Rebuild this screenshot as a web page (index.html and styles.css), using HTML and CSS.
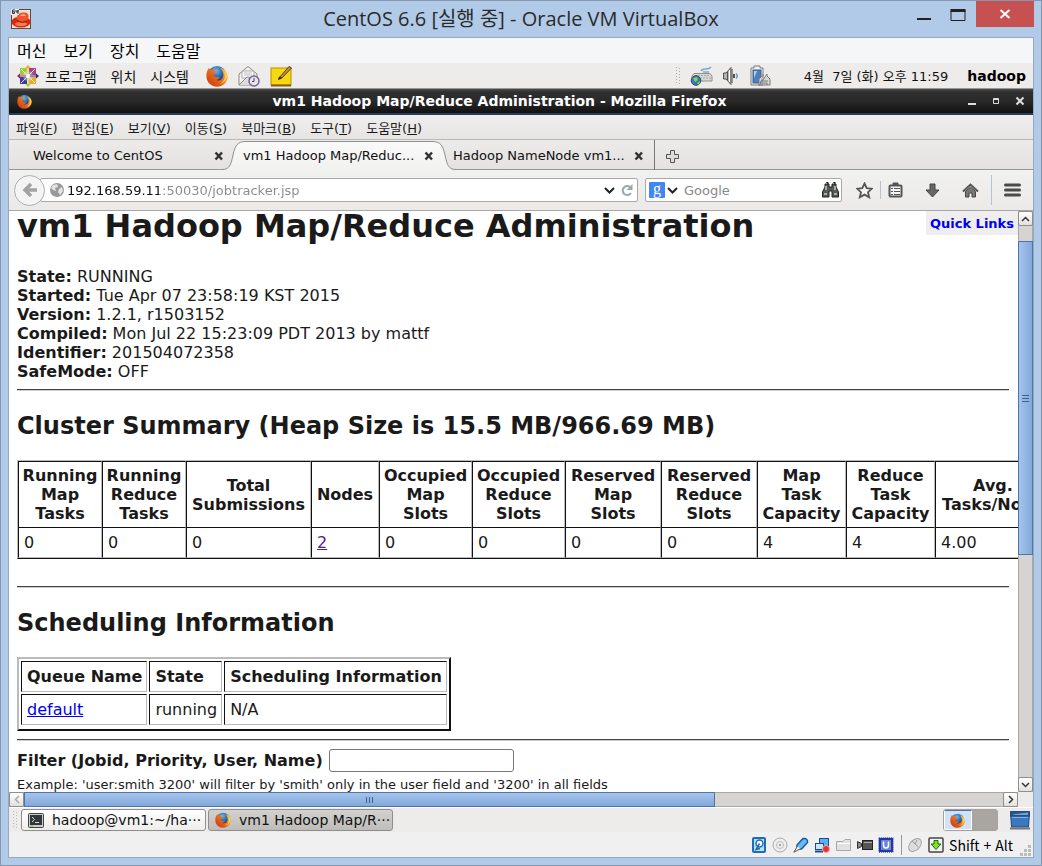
FILE: index.html
```html
<!DOCTYPE html>
<html lang="ko">
<head>
<meta charset="utf-8">
<title>CentOS 6.6 [실행 중] - Oracle VM VirtualBox</title>
<link rel="stylesheet" href="styles.css">
</head>
<body>
<svg class="defs" width="0" height="0" aria-hidden="true">
  <defs>
    <radialGradient id="globe" cx="45%" cy="25%" r="70%"><stop offset="0" stop-color="#6fb7e8"/><stop offset=".5" stop-color="#2a67ad"/><stop offset="1" stop-color="#14285c"/></radialGradient>
    <linearGradient id="fox" x1="0" y1="1" x2="1" y2="0"><stop offset="0" stop-color="#c92c12"/><stop offset=".55" stop-color="#ee7018"/><stop offset="1" stop-color="#ffd84a"/></linearGradient>
    <linearGradient id="tab" x1="0" y1="0" x2="0" y2="1"><stop offset="0" stop-color="#fafafa"/><stop offset="1" stop-color="#f1f1f0"/></linearGradient>
    <symbol id="firefox" viewBox="0 0 20 20">
      <circle cx="10" cy="9.5" r="8.5" fill="url(#globe)"/>
      <path d="M1.2 5.2 2.6 2.8 4 4.6C5 4 6.3 4 7.4 4.5L9.8 5.4 8.3 7.3 6.6 8.4C7 10.2 8 11.3 9.8 11.2L12.2 10.8C11.9 12.6 9.8 13.7 8.4 13.5 12 15.4 15.8 12.8 15.8 9 15.8 6.3 14.5 4.2 13 2.5 17 3.6 19.6 6.8 19.6 10.4 19.6 15.8 15.2 19.7 10 19.7 4.4 19.7.4 15.4.4 10.3.4 8.3.6 6.6 1.2 5.2Z" fill="url(#fox)"/>
      <path d="M15.8 5C18.8 9.6 17 15.2 12.4 17.2 16.8 16.4 19.3 13.4 19.1 9.6 18.7 7.4 17.6 6 15.8 5Z" fill="#ffe45c" opacity=".8"/>
    </symbol>
  </defs>
</svg>

<div class="vm">
  <header class="vm-title">
    <svg class="vm-icon" width="22" height="22" viewBox="0 0 22 22" aria-hidden="true"><rect x="1.500" y="1.500" width="19" height="19" fill="#f4dfd3" stroke="#5c4a40"/><ellipse cx="11" cy="14" rx="9.500" ry="5.500" fill="#d6290e"/><ellipse cx="11" cy="16" rx="6" ry="2" fill="#ff7a4c"/><path d="M7 12C6 6 10 4 15 4.500 19 5 19.500 9 17.500 12.500 14 15 9 14.500 7 12Z" fill="#f0552a"/><path d="M10 8C12 5.500 15 6 16 8Z" fill="#ffb28f"/><path d="M7 12C10 15 15 15 17.500 12" fill="none" stroke="#7d1203"/><rect x="1" y="1" width="8" height="6" fill="#eee"/><path d="M5 2H2.500V5.500H4.500V3.800H2.500M6 2V4H8V2V6" fill="none" stroke="#222" stroke-width=".9"/></svg>
    <h1 class="vm-name">CentOS 6.6 [실행 중] - Oracle VM VirtualBox</h1>
    <div class="vm-controls">
      <button class="vm-btn" aria-label="최소화"><svg width="16" height="20"><path d="M1 18h14" stroke="#222" stroke-width="2"/></svg></button>
      <button class="vm-btn" aria-label="최대화"><svg width="16" height="20"><path d="M1 9.500V19.500H15V9" fill="none" stroke="#222"/><path d="M.5 9.500h15" stroke="#222" stroke-width="3"/></svg></button>
      <button class="vm-close" aria-label="닫기"><svg width="12" height="10"><path d="M1.500 1 10.500 9M10.500 1 1.500 9" stroke="#fff" stroke-width="2"/></svg></button>
    </div>
  </header>

  <div class="vm-body">
    <nav class="vm-menu">
      <button>머신</button><button>보기</button><button>장치</button><button>도움말</button>
    </nav>

    <div class="panel">
      <button class="panel-item"><svg width="22" height="22" viewBox="0 0 22 22"><path d="M11 0 14 3.500V9H8V3.500Z" fill="#efa724"/><path d="M0 11 3.500 8H9V14H3.500Z" fill="#932279"/><path d="M22 11 18.500 8H13V14H18.500Z" fill="#262577"/><path d="M11 22 14 18.500V13H8V18.500Z" fill="#9ccd2a"/><path d="M3 3H10V10H3Z" fill="#9ccd2a"/><path d="M12 3H19V10H12Z" fill="#a1408b"/><path d="M3 12H10V19H3Z" fill="#3f3c9b"/><path d="M12 12H19V19H12Z" fill="#efa724"/><path d="M11 3V19M3 11H19" stroke="#f4f4f4" stroke-width="1.200"/><path d="M4 4 18 18M18 4 4 18" stroke="#f4f4f4" stroke-width=".9"/><path d="M9 6.500V9H6.500M13 6.500V9H15.500M9 15.500V13H6.500M13 15.500V13H15.500" fill="none" stroke="#f4f4f4" stroke-width=".7"/></svg>프로그램</button>
      <button class="panel-item">위치</button>
      <button class="panel-item">시스템</button>
      <div class="launchers">
        <button aria-label="Firefox"><svg width="22" height="22"><use href="#firefox"/></svg></button>
        <button aria-label="메일"><svg width="22" height="22" viewBox="0 0 22 22"><path d="M1 9 10 1.500 19 9V20H1Z" fill="#f1f1ef" stroke="#888"/><path d="M4 6H16V13H4Z" fill="#fff" stroke="#aaa"/><path d="M6 8H14M6 10H14" stroke="#bbb"/><path d="M1 20 9 12H11L19 20" fill="#ddd" stroke="#888"/><circle cx="16" cy="16" r="5" fill="#e9e4f0" stroke="#75629a" stroke-width="1.500"/><path d="M16 13V16.500H14" fill="none" stroke="#444"/></svg></button>
        <button aria-label="메모"><svg width="22" height="22" viewBox="0 0 22 22"><rect x="1" y="3" width="20" height="17" fill="#f5d80d" stroke="#b59200"/><path d="M1 20.500H21" stroke="#8c5a12" stroke-width="2"/><path d="M9 13 19 1.500 21.500 3 12 13 8.500 14.500Z" fill="#c98b4a" stroke="#5c3715"/><path d="M8 14.500 9.500 11.500 12 13Z" fill="#222"/></svg></button>
      </div>
      <div class="tray">
        <svg width="5" height="18"><path d="M1.500 0V18M4.500 1V18" stroke="#aaa" stroke-dasharray="1 2"/></svg>
        <svg width="24" height="22" viewBox="0 0 24 22"><path d="M12 6C14 2 19 6 22 2M14 7H20" fill="none" stroke="#7fa8cf" stroke-width="1.500"/><path d="M5 8.500H21L23 11V16H3V11Z" fill="#d8d9d4" stroke="#8e908b"/><path d="M6 10.500H21M5 13H22" stroke="#a5a7a2" stroke-dasharray="2 1"/><circle cx="7" cy="15.500" r="4.800" fill="#3a76b8" stroke="#234d7d"/><path d="M4 13 8 12 9 15 6 17ZM8 18 11 16 10 20Z" fill="#8ed32f"/></svg>
        <svg width="18" height="20" viewBox="0 0 18 20"><path d="M1.500 7H4L9 1.500V18.500L4 13H1.500Z" fill="#b5b6b1" stroke="#51534f"/><path d="M5.500 6V14" stroke="#51534f"/><path d="M7.500 4V16" stroke="#fff"/><path d="M10 3V17" stroke="#777" stroke-width="1.500"/><path d="M12 8V12" stroke="#51534f" stroke-width="2"/><path d="M14 7.500Q16.500 10 14 12.500" fill="none" stroke="#6b9bd0" stroke-width="1.500"/></svg>
        <svg width="22" height="22" viewBox="0 0 22 22"><path d="M2 3H5V1H11V3H14V20H2Z" fill="#f1f1ef" stroke="#7b7d79"/><rect x="4" y="5" width="8" height="13" fill="#4d7fb8" stroke="#34609a"/><path d="M5 6H8L5 13Z" fill="#b8d0ea"/><path d="M10 21V14L13 11H14V9M18 9V11L21 14V20H10.500Z" fill="#d8d9d4" stroke="#7b7d79"/><path d="M12 16H19M13 20V18H18V20" fill="none" stroke="#7b7d79"/></svg>
      </div>
      <time class="clock">4월&nbsp; 7일 (화) 오후 11:59</time>
      <b class="user">hadoop</b>
    </div>

    <div class="ff-title">
      <svg width="15" height="15"><use href="#firefox"/></svg>
      <strong class="ff-name">vm1 Hadoop Map/Reduce Administration - Mozilla Firefox</strong>
      <button aria-label="최소화"><svg width="10" height="10"><path d="M1 8h8" stroke="#ddd" stroke-width="2"/></svg></button>
      <button aria-label="최대화"><svg width="10" height="10"><path d="M2.500 2.500h5V7.500H2.500ZM2 3.500H8" fill="none" stroke="#ddd"/></svg></button>
      <button aria-label="닫기"><svg width="10" height="10"><path d="M1.500 1.500 8.500 8.500M8.500 1.500 1.500 8.500" stroke="#ddd" stroke-width="2"/></svg></button>
    </div>

    <nav class="ff-menu">
      <button>파일(<u>F</u>)</button><button>편집(<u>E</u>)</button><button>보기(<u>V</u>)</button><button>이동(<u>S</u>)</button><button>북마크(<u>B</u>)</button><button>도구(<u>T</u>)</button><button>도움말(<u>H</u>)</button>
    </nav>

    <div class="tabs">
      <div class="tab"><button class="tab-label">Welcome to CentOS</button><button class="tab-x" aria-label="탭 닫기"><svg width="10" height="10"><path d="M1.500 1.500 8 8.500M8 1.500 1.500 8.500" stroke="#333" stroke-width="2.500"/></svg></button></div>
      <div class="tab tab-on">
        <svg width="24" height="30"><path d="M0 29.500C8 29.500 9 24 11 15 13 6 15 1.500 24 1.500V30H0Z" fill="url(#tab)"/><path d="M0 29.500C8 29.500 9 24 11 15 13 6 15 1.500 24 1.500" fill="none" stroke="#8f8f8d"/></svg>
        <div class="tab-mid"><button class="tab-label">vm1 Hadoop Map/Reduc...</button><button class="tab-x" aria-label="탭 닫기"><svg width="10" height="10"><path d="M1.500 1.500 8 8.500M8 1.500 1.500 8.500" stroke="#333" stroke-width="2.500"/></svg></button></div>
        <svg width="24" height="30"><path d="M24 29.500C16 29.500 15 24 13 15 11 6 9 1.500 0 1.500V30H24Z" fill="url(#tab)"/><path d="M24 29.500C16 29.500 15 24 13 15 11 6 9 1.500 0 1.500" fill="none" stroke="#8f8f8d"/></svg>
      </div>
      <div class="tab tab-last"><button class="tab-label">Hadoop NameNode vm1...</button><button class="tab-x" aria-label="탭 닫기"><svg width="10" height="10"><path d="M1.500 1.500 8 8.500M8 1.500 1.500 8.500" stroke="#333" stroke-width="2.500"/></svg></button></div>
      <button class="tab-new" aria-label="새 탭"><svg width="13" height="13"><path d="M4.500.5H8.500V4.500H12.500V8.500H8.500V12.500H4.500V8.500H.5V4.500H4.500Z" fill="#ddd" stroke="#555"/></svg></button>
    </div>

    <div class="nav">
      <button class="back" aria-label="뒤로"><svg width="16" height="16"><path d="M9 2 3 8 9 14M3.500 8H15" fill="none" stroke="#a2a2a2" stroke-width="3.500"/></svg></button>
      <div class="url">
        <svg width="14" height="14"><circle cx="7" cy="7" r="7" fill="#999"/><path d="M3 2 7 1 8 4 5 5 6 8 3 7 1 5ZM9 6 12 4 13 8 10 12 8 9Z" fill="#e4e4e4"/></svg>
        <input class="url-text" aria-label="주소" value="192.168.59.11:50030/jobtracker.jsp">
        <button aria-label="방문 기록"><svg width="11" height="7"><path d="M1 1 5.500 5.500 10 1" fill="none" stroke="#222" stroke-width="2"/></svg></button>
        <button aria-label="새로 고침"><svg width="12" height="12"><path d="M9 3A4.500 4.500 0 1 0 10 9" fill="none" stroke="#9aa6b1" stroke-width="2"/><path d="M11.500 0V6H5.500Z" fill="#9aa6b1"/></svg></button>
      </div>
      <div class="search">
        <button class="engine" aria-label="검색 엔진"><span class="g">g</span><svg width="11" height="7"><path d="M1 1 5.500 5.500 10 1" fill="none" stroke="#222" stroke-width="2"/></svg></button>
        <input aria-label="검색" placeholder="Google">
        <button aria-label="찾기"><svg width="17" height="16" viewBox="0 0 17 16"><path d="M3 2H7V5H10V2H14V5L16.500 10V15H10V9H7V15H.5V10L3 5Z" fill="#555a55" stroke="#222"/><path d="M2 12H5M12 12H15M4 4V8M13 4V8" stroke="#c5c9c5" stroke-width="1.500"/><path d="M4 0h2v2M11 0h2v2" stroke="#333"/></svg></button>
      </div>
      <div class="tools">
        <button aria-label="북마크"><svg width="17" height="17"><path d="M8.500 1.500 10.700 6.200 15.800 6.700 12 10.200 13.200 15.300 8.500 12.600 3.800 15.300 5 10.200 1.200 6.700 6.300 6.200Z" fill="#f5f5f5" stroke="#555" stroke-width="1.800"/></svg></button>
        <button class="lined" aria-label="북마크 목록"><svg width="15" height="16"><rect x="1.500" y="3.500" width="12" height="11" rx="1" fill="#f5f5f5" stroke="#555" stroke-width="2"/><path d="M5 3V1H10V3" fill="#555" stroke="#555"/><path d="M3 6.500H5M6 6.500H12M3 9.500H5M6 9.500H12M3 12.500H5M6 12.500H12" stroke="#555"/></svg></button>
        <button aria-label="다운로드"><svg width="15" height="15"><path d="M5 1H10V7H14L7.500 14 1 7H5Z" fill="#666" stroke="#444"/></svg></button>
        <button aria-label="홈"><svg width="17" height="15"><path d="M3.500 8.500V14H7V10H10V14H13.500V8.500L8.500 4Z" fill="#777" stroke="#444"/><path d="M1 8.500 8.500 1.500 16 8.500" fill="none" stroke="#555" stroke-width="2"/></svg></button>
        <button class="lined menu-btn" aria-label="메뉴"><svg width="17" height="14"><path d="M1.500 2H15.500M1.500 7H15.500M1.500 12H15.500" stroke="#4a4a4a" stroke-width="3" stroke-linecap="round"/></svg></button>
      </div>
    </div>

    <div class="view">
      <main class="page">
        <a class="quick" href="#quick">Quick Links</a>
        <h2 class="page-title">vm1 Hadoop Map/Reduce Administration</h2>
        <p class="facts"><b>State:</b> RUNNING<br><b>Started:</b> Tue Apr 07 23:58:19 KST 2015<br><b>Version:</b> 1.2.1, r1503152<br><b>Compiled:</b> Mon Jul 22 15:23:09 PDT 2013 by mattf<br><b>Identifier:</b> 201504072358<br><b>SafeMode:</b> OFF</p>
        <hr>
        <h3>Cluster Summary (Heap Size is 15.5 MB/966.69 MB)</h3>
        <table class="summary">
          <colgroup><col class="c-run" span="2"><col class="c-total"><col class="c-nodes"><col class="c-occ" span="2"><col class="c-res" span="2"><col class="c-cap" span="2"><col class="c-avg"></colgroup>
          <thead><tr><th>Running<br>Map<br>Tasks</th><th>Running<br>Reduce<br>Tasks</th><th>Total<br>Submissions</th><th>Nodes</th><th>Occupied<br>Map<br>Slots</th><th>Occupied<br>Reduce<br>Slots</th><th>Reserved<br>Map<br>Slots</th><th>Reserved<br>Reduce<br>Slots</th><th>Map<br>Task<br>Capacity</th><th>Reduce<br>Task<br>Capacity</th><th>Avg.<br>Tasks/Node</th></tr></thead>
          <tbody><tr><td>0</td><td>0</td><td>0</td><td><a class="seen" href="#nodes">2</a></td><td>0</td><td>0</td><td>0</td><td>0</td><td>4</td><td>4</td><td>4.00</td></tr></tbody>
        </table>
        <hr class="hr-gap">
        <h3>Scheduling Information</h3>
        <table class="queues">
          <thead><tr><th>Queue Name</th><th>State</th><th>Scheduling Information</th></tr></thead>
          <tbody><tr><td><a href="#default">default</a></td><td>running</td><td>N/A</td></tr></tbody>
        </table>
        <hr>
        <div class="filter"><label for="filter">Filter (Jobid, Priority, User, Name)</label><input id="filter" type="text"></div>
        <p class="hint">Example: 'user:smith 3200' will filter by 'smith' only in the user field and '3200' in all fields</p>
      </main>
      <div class="vbar">
        <button aria-label="위로"><svg width="9" height="6"><path d="M1 5 4.500 1.500 8 5" fill="none" stroke="#333" stroke-width="1.500"/></svg></button>
        <div class="vtrack"><div class="vthumb"><svg width="7" height="7"><path d="M0 .5H7M0 3.500H7M0 6.500H7" stroke="#3f6190"/></svg></div></div>
        <button aria-label="아래로"><svg width="9" height="6"><path d="M1 1 4.500 4.500 8 1" fill="none" stroke="#333" stroke-width="1.500"/></svg></button>
      </div>
      <div class="hbar">
        <button aria-label="왼쪽으로"><svg width="6" height="9"><path d="M5 1 1.500 4.500 5 8" fill="none" stroke="#aaa" stroke-width="1.500"/></svg></button>
        <div class="htrack"><div class="hthumb"><svg width="7" height="6"><path d="M.5 0V6M3.500 0V6M6.500 0V6" stroke="#3f6190"/></svg></div></div>
        <button aria-label="오른쪽으로"><svg width="6" height="9"><path d="M1 1 4.500 4.500 1 8" fill="none" stroke="#333" stroke-width="1.500"/></svg></button>
      </div>
      <div class="corner"></div>
    </div>

    <div class="taskbar">
      <svg width="6" height="18"><path d="M1.500 0V18M4.500 1V18" stroke="#bbb" stroke-dasharray="1 2"/></svg>
      <div class="tasks">
        <button class="task"><svg width="16" height="15"><rect x=".5" y=".5" width="15" height="14" rx="1" fill="#ccc" stroke="#444"/><rect x="2" y="2" width="12" height="10" fill="#30383a"/><path d="M4 4 6.500 6.500 4 9M7 9.500H11" fill="none" stroke="#ddd"/><path d="M2 13H5" stroke="#6fcf2f"/></svg><span>hadoop@vm1:~/ha···</span></button>
        <button class="task task-on"><svg width="16" height="16"><use href="#firefox"/></svg><span>vm1 Hadoop Map/R···</span></button>
      </div>
      <div class="pager"><button class="space-on" aria-label="작업 공간 1"><svg width="15" height="15"><use href="#firefox"/></svg></button><button aria-label="작업 공간 2"></button></div>
      <button class="trash" aria-label="휴지통"><svg width="22" height="20"><path d="M1.500 2H20.500L19.500 17H2.500Z" fill="#3b78bd" stroke="#1d4a80"/><path d="M1.500 1.500H20.500V6H1.500Z" fill="#28568f" stroke="#1d4a80"/><path d="M4 4.500 19 2.500V5H4Z" fill="#6fa3d8"/><path d="M3 7.500H19" stroke="#7fb1e3"/><path d="M1 18.500H21" stroke="#777" stroke-width="2"/></svg></button>
    </div>

    <footer class="status">
      <svg width="15" height="16"><rect x="1" y="1" width="12" height="14" rx="1" fill="#bfe0f8" stroke="#1c6eb8" stroke-width="2"/><circle cx="7.500" cy="6.500" r="3.500" fill="#fff" stroke="#1c6eb8" stroke-width="1.500"/><path d="M7.500 6.500 4 12.500 8 11.500" fill="none" stroke="#1c6eb8" stroke-width="1.500"/></svg>
      <svg width="16" height="16"><circle cx="8" cy="8" r="7" fill="#eee" stroke="#aaa"/><circle cx="8" cy="8" r="3.500" fill="none" stroke="#bbb"/><circle cx="8" cy="8" r="1" fill="#888"/></svg>
      <svg width="16" height="16"><path d="M4 8 10 1.500Q15 1 14.500 5.500L8.500 12Q3.500 12.500 4 8Z" fill="#6db8f2" stroke="#145fa8" stroke-width="1.500"/><path d="M4.500 9 .8 15.200 7.500 11.800" fill="#eee" stroke="#555"/></svg>
      <svg width="16" height="16"><rect x="5.500" y="1.500" width="9" height="8" fill="#5eaef2" stroke="#184f8c"/><rect x="1.500" y="6.500" width="8" height="6" fill="#cde6fb" stroke="#184f8c"/><path d="M1 14.500H9" stroke="#184f8c" stroke-width="2"/><circle cx="12" cy="12" r="3.500" fill="#e0352b" stroke="#f7a59c"/></svg>
      <svg width="17" height="14"><path d="M1.500 12.500V3.500H8L10 1.500H15.500V12.500Z" fill="#e2e2e2" stroke="#a8a8a8"/><path d="M2 5.500H15" stroke="#fff"/></svg>
      <svg width="16" height="12"><rect x="5.500" y="1.500" width="10" height="9" fill="#555" stroke="#222"/><path d="M.5 2.500V9.500L4.500 7.500V4.500Z" fill="#888" stroke="#333"/><path d="M7 3.500H15" stroke="#aaa"/></svg>
      <svg width="16" height="16"><rect x="2" y="2" width="12" height="12" fill="#6a83dc" stroke="#28379e" stroke-width="2"/><rect x=".8" y=".8" width="14.400" height="14.400" fill="none" stroke="#28379e" stroke-dasharray="1 1"/><path d="M5.500 4.500V8Q5.500 11 8 11T10.500 8V4.500" fill="none" stroke="#fff" stroke-width="1.500"/></svg>
      <i class="rule"></i>
      <svg width="16" height="16"><ellipse cx="8" cy="8" rx="5" ry="7.500" transform="rotate(45 8 8)" fill="#ddd" stroke="#a3a3a3"/><path d="M5 4 11.500 10M10 3 8 7" fill="none" stroke="#999"/></svg>
      <svg width="16" height="16"><rect x="1" y="1" width="14" height="14" rx="1" fill="#f4f4f4" stroke="#444" stroke-width="1.500"/><path d="M6 3.500H10V7H13L8 12.500 3 7H6Z" fill="#7ce41c" stroke="#226b0a"/></svg>
      <span class="hostkey">Shift + Alt</span>
      <svg class="grip" width="11" height="11"><path d="M8 1.500H11M4 5.500H7M8 5.500H11M0 9.500H3M4 9.500H7M8 9.500H11" stroke="#bbb" stroke-width="3"/></svg>
    </footer>
  </div>
</div>
</body>
</html>
```

FILE: styles.css
```css
* { box-sizing: border-box; }
body { margin: 0; font-family: "DejaVu Sans", "Noto Sans CJK KR", sans-serif; font-size: 13px; color: #1a1a1a; }
button { margin: 0; padding: 0; border: 0; background: none; font: inherit; color: inherit; display: inline-flex; align-items: center; }
input { font: inherit; }
svg { display: block; flex: none; }
.defs { position: absolute; }

/* virtual machine window */
.vm { display: flex; flex-direction: column; height: 100vh; padding: 0 7px 7px; border: 1px solid #8597b0; background: #b0cae8; overflow: hidden; }
.vm-title { flex: none; height: 36px; display: grid; grid-template-columns: 1fr auto 1fr; align-items: center; }
.vm-icon { margin-left: 2px; }
.vm-name { margin: 0; font: 20px/24px "Open Sans", "Noto Sans CJK KR", sans-serif; color: #2a2a2a; }
.vm-controls { display: flex; justify-content: flex-end; align-self: start; gap: 18px; }
.vm-close { width: 58px; height: 26px; justify-content: center; background: #c75050; margin-left: -8px; }
.vm-btn { height: 20px; }
.vm-body { flex: 1; min-height: 0; display: flex; flex-direction: column; border: 1px solid #93a9c4; background: #f0f0f0; }
.vm-body > * { flex: none; }
.vm-menu { height: 25px; display: flex; align-items: center; gap: 17px; padding: 0 8px 2px; background: #f5f6f8; font: 16px/24px "Noto Sans CJK KR", sans-serif; color: #000; }

/* desktop panel */
.panel { height: 26px; display: flex; align-items: center; padding: 0 7px 0 8px; background: #edeceb; border-bottom: 1px solid #999; color: #111; }
.panel-item { gap: 6px; margin-right: 14px; font: 14px/20px "Noto Sans CJK KR", sans-serif; }
.launchers { display: flex; gap: 10px; margin-left: 3px; }
.tray { display: flex; align-items: center; gap: 9px; margin-left: auto; }
.clock { margin-left: 33px; }
.user { margin-left: 19px; font-size: 14px; color: #000; }

/* browser title and menu */
.ff-title { height: 26px; display: flex; align-items: center; gap: 14px; padding: 0 8px; color: #fff; background: linear-gradient(#4a4a4a 0, #303030 3px, #292929 50%, #111 100%); border-bottom: 2px solid #263b58; }
.ff-name { flex: 1; text-align: center; font-size: 14px; }
.ff-menu { height: 25px; display: flex; align-items: center; gap: 14px; padding: 0 7px; background: linear-gradient(#efeeed, #e6e5e3); border-bottom: 1px solid #bab9b7; white-space: nowrap; }
.ff-menu button { display: block; }

/* tabs */
.tabs { height: 30px; display: flex; background: linear-gradient(#ecebea, #e3e2e0); box-shadow: inset 0 -1px #989896; }
.tab { display: flex; align-items: center; flex: 0 1 213px; justify-content: space-between; min-width: 0; padding: 0 0 0 24px; color: #111; white-space: nowrap; }
.tab-x { padding: 2px 0 0; margin-right: -2px; }
.tab-on { flex-basis: 234px; padding: 0; z-index: 1; }
.tab-mid { position: relative; flex: 1; min-width: 0; height: 29px; align-self: flex-end; display: flex; align-items: center; justify-content: space-between; margin: 0 -1px; padding-bottom: 2px; border-top: 1px solid #8f8f8d; background: linear-gradient(#fafafa, #f1f1f0); }
.tab-mid .tab-label { margin-left: -2px; }
.tab-mid .tab-x { margin-right: -1px; }
.tab-last { flex-basis: 199px; padding: 0 12px 0 0; border-right: 1px solid #777; }
.tab-last .tab-label { margin-left: -3px; }
.tab-new { padding: 2px 0 0 11px; }

/* navigation */
.nav { height: 41px; display: flex; align-items: center; padding: 0 12px 0 5px; background: linear-gradient(#f1f1f0, #ebeae8); border-bottom: 1px solid #a9a8a6; }
.back { width: 31px; height: 31px; justify-content: center; border: 1px solid #aab0b8; border-radius: 50%; background: #f4f4f4; z-index: 1; }
.url, .search { height: 24px; display: flex; align-items: center; gap: 6px; border: 1px solid #aaa9a7; border-radius: 2px; background: #fff; }
.url { flex: 1; min-width: 0; margin-left: -5px; padding: 0 4px 0 9px; }
.url > svg { margin-right: -3px; }
.url-text { flex: 1; min-width: 0; border: 0; padding: 0; outline: 0; color: transparent; background: linear-gradient(90deg, #111 92px, #8a8a8a 92px); -webkit-background-clip: text; background-clip: text; }
.search { flex: 0 1 197px; margin-left: 7px; padding: 0 2px 0 3px; }
.search input { flex: 1; width: 0; min-width: 0; border: 0; padding: 0; outline: 0; background: none; }
.search input::placeholder { color: #888; }
.engine { gap: 2px; }
.g { width: 16px; height: 16px; border-radius: 1px; background: #4285f4; color: #fff; font: 16px/13px "Liberation Serif", serif; text-align: center; }
.tools { display: flex; align-items: center; gap: 22px; padding-left: 14px; }
.tools .lined { height: 18px; padding-left: 7px; margin-left: -15px; border-left: 1px solid #b7c3d0; }
.tools .menu-btn { height: 30px; padding-left: 12px; margin-left: -10px; }

/* viewport and scroll bars */
.vm-body > .view { flex: 1; min-height: 0; display: grid; grid-template: minmax(0, 1fr) 15px / minmax(0, 1fr) 15px; }
.page { position: relative; overflow: hidden; padding: 0 9px 0 8px; background: #fff; font-size: 16px; line-height: 19px; }
.page-title { margin: -4px 0 22px; font-size: 32px; line-height: 38px; white-space: nowrap; }
.quick { position: absolute; top: 0; right: 0; padding: 3px 4px 2px; background: #eee; color: #00e; font-size: 13px; line-height: 19px; font-weight: bold; text-decoration: none; }
.facts { margin: 0; }
hr { height: 2px; margin: 8px 0 21px; border: 0; border-top: 1px solid #444; border-bottom: 1px solid #ccc; }
h3 { margin: 0 0 20px; font-size: 24px; line-height: 28px; }
a { color: #00e; }
.seen { color: #551a8b; }
table { border-spacing: 0; }
.summary { table-layout: fixed; width: 1035px; border: 1px solid #bbb; border-bottom-color: #111; white-space: nowrap; }
.c-run { width: 84px; }
.c-total { width: 125px; }
.c-nodes { width: 68px; }
.c-occ { width: 93px; }
.c-res { width: 96px; }
.c-cap { width: 89px; }
.c-avg { width: 116px; }
.summary th, .summary td { padding: 4px 3px; border-left: 1px solid #111; border-top: 1px solid #111; border-right: 1px solid #bbb; }
.summary td { padding: 5px; border-bottom: 1px solid #bbb; }
hr.hr-gap { margin-top: 27px; }
.queues { border: 2px solid #111; border-top-color: #bbb; border-left-color: #bbb; border-spacing: 2px; padding-bottom: 2px; }
.queues th, .queues td { padding: 5px 4px 5px 5px; border: 1px solid #bbb; border-top-color: #111; border-left-color: #111; text-align: left; }
.queues + hr { margin-bottom: 8px; }
.filter { display: flex; align-items: center; gap: 6px; font-weight: bold; }
.filter input { width: 185px; height: 23px; border: 1px solid #777; border-radius: 3px; background: #fff; }
.hint { margin: 3px 0 0; font-size: 13px; white-space: nowrap; }
.vbar, .hbar { display: flex; background: #d5d4d2; }
.vbar { flex-direction: column; box-shadow: inset 1px 0 #a9a8a6, inset -1px 0 #a9a8a6; }
.hbar { box-shadow: inset 0 1px #a9a8a6, inset 0 -1px #a9a8a6; }
.vbar button, .hbar button { flex: none; width: 15px; height: 15px; justify-content: center; border: 1px solid #8e8e8c; border-radius: 2px; background: linear-gradient(#fff, #e2e1df); }
.vtrack, .htrack { flex: 1; min-width: 0; min-height: 0; }
.vthumb, .hthumb { display: flex; align-items: center; justify-content: center; border: 1px solid #4f74a5; }
.vtrack { padding-top: 15px; }
.vthumb { height: 58.6%; background: linear-gradient(90deg, #a5c4ec, #82a8d9); }
.hthumb { width: 70.6%; height: 15px; background: linear-gradient(#a5c4ec, #82a8d9); }
.corner { background: #edeceb; }

/* taskbar and status */
.taskbar { height: 25px; display: flex; align-items: center; gap: 3px; padding: 0 2px 0 3px; background: #edeceb; border-top: 1px solid #fff; color: #111; }
.tasks { display: flex; gap: 2px; }
.task { width: 185px; height: 22px; gap: 8px; padding: 0 6px; border: 1px solid #8e8e8c; border-radius: 3px; background: linear-gradient(#fff, #eeedec); white-space: nowrap; overflow: hidden; font-size: 14px; }
.task-on { background: linear-gradient(#d3d1ce, #bfbdba); }
.pager { display: flex; width: 55px; height: 22px; margin-left: auto; border: 1px solid #a5a19d; border-radius: 3px; background: #a9a5a1; overflow: hidden; }
.pager button { flex: 1; justify-content: center; }
.pager .space-on { background: #cfe2f8; border: 1px solid #fff; border-top-color: #4f74a5; }
.trash { margin-left: 8px; }
.status { height: 25px; display: flex; align-items: center; justify-content: flex-end; gap: 5px; padding-right: 2px; }
.rule { width: 1px; height: 20px; margin-left: 2px; background: #999; }
.hostkey { font: 14px/20px "Noto Sans CJK KR", sans-serif; color: #000; }
.grip { align-self: flex-end; margin: 0 0 1px 2px; }
```
